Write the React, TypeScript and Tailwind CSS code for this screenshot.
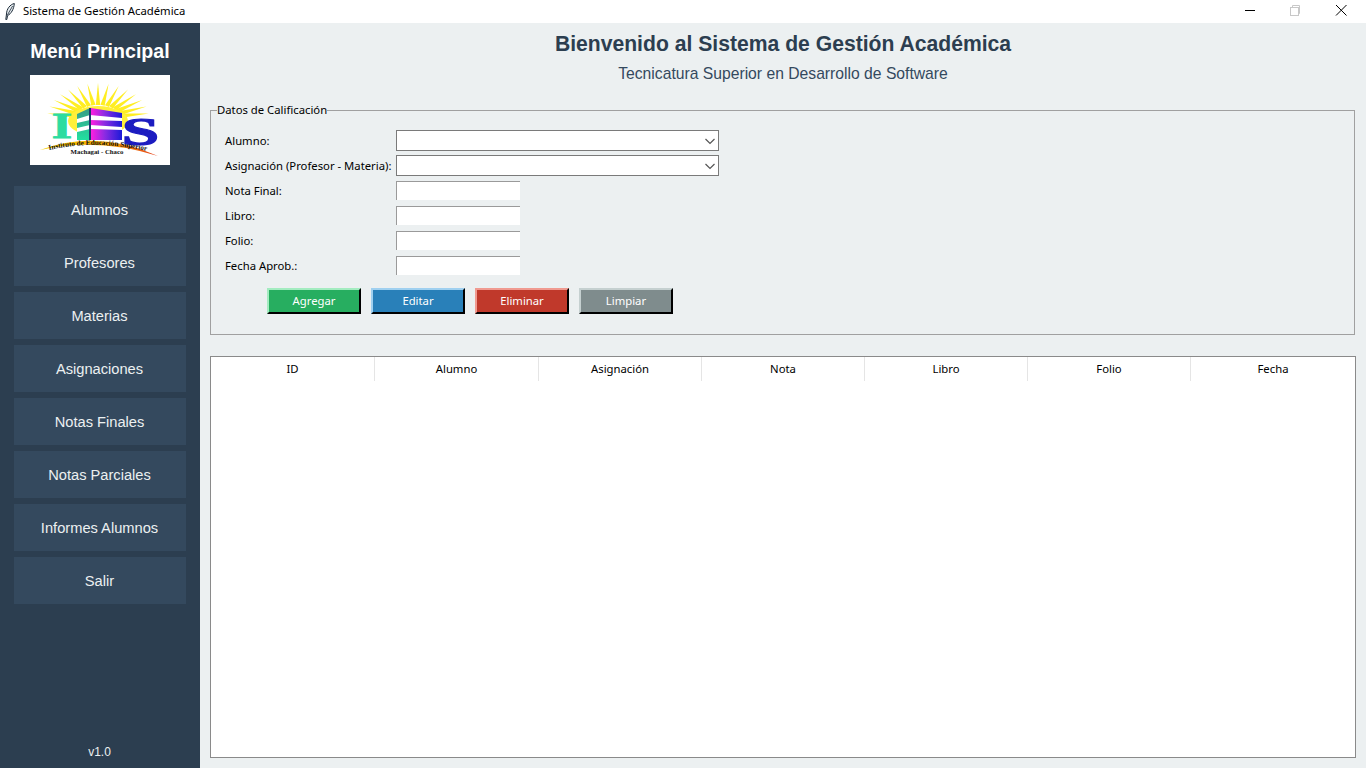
import React from "react";

const menu = ["Alumnos", "Profesores", "Materias", "Asignaciones", "Notas Finales", "Notas Parciales", "Informes Alumnos", "Salir"];
const rays = [-84, -72, -60, -48, -36, -24, -12, 0, 12, 24, 36, 48, 60, 72, 84];
const cols: [string, string][] = [
  ["ID", "w-[164px]"],
  ["Alumno", "w-[164px]"],
  ["Asignación", "w-[163px]"],
  ["Nota", "w-[163px]"],
  ["Libro", "w-[163px]"],
  ["Folio", "w-[163px]"],
  ["Fecha", "flex-1"],
];

function rayPoints(a: number) {
  const t = (a * Math.PI) / 180;
  const tipX = 68 + 51 * Math.sin(t);
  const tipY = 42 - 34 * Math.cos(t);
  const d = 2.2;
  const bx = 68 + 22 * Math.sin(t);
  const by = 42 - 12 * Math.cos(t);
  const nx = Math.cos(t) * d;
  const ny = Math.sin(t) * d;
  return `${tipX},${tipY} ${bx + nx},${by + ny} ${bx - nx},${by - ny}`;
}

function Logo() {
  return (
    <svg viewBox="0 0 140 90" className="w-[140px] h-[90px] block bg-white">
      <defs>
        <linearGradient id="g1" x1="0" x2="1" y1="0" y2="0">
          <stop offset="0" stopColor="#ff1fe0" />
          <stop offset="0.45" stopColor="#8a2be2" />
          <stop offset="1" stopColor="#1a1ad8" />
        </linearGradient>
        <linearGradient id="g2" x1="0" x2="0" y1="0" y2="1">
          <stop offset="0" stopColor="#3a9a86" />
          <stop offset="1" stopColor="#22e0a0" />
        </linearGradient>
        <linearGradient id="sw" x1="0" x2="1" y1="0" y2="0">
          <stop offset="0" stopColor="#f5d000" />
          <stop offset="0.6" stopColor="#f8a000" />
          <stop offset="1" stopColor="#e23a1a" />
        </linearGradient>
        <path id="arc" d="M19 75 Q68 64 121 77" fill="none" />
      </defs>
      {rays.map((a) => (
        <polygon key={a} points={rayPoints(a)} fill="#ffee22" />
      ))}
      <ellipse cx="68" cy="46" rx="30" ry="15" fill="#fff03a" />
      <text transform="translate(32 63) scale(1.5 1)" textAnchor="middle" fontFamily="'Liberation Serif', serif" fontWeight="700" fontSize="35" fill="#2ddca0" stroke="#2ddca0" strokeWidth="0.8">I</text>
      <polygon points="47,39 60,33 60,65 47,65" fill="url(#g2)" />
      <polygon points="61,33 92,38 92,65 61,65" fill="url(#g1)" />
      <polygon points="47,44 60,40 92,43 92,46 60,45 47,48" fill="#ffffff" />
      <polygon points="47,53 60,50 92,52 92,55 60,54 47,57" fill="#ffffff" />
      <rect x="59" y="33" width="2" height="32" fill="#1d3a6e" />
      <text transform="translate(110.5 69.5) scale(1.6 0.95)" textAnchor="middle" fontFamily="'Liberation Serif', serif" fontWeight="700" fontSize="42" fill="#1c1cc0" stroke="#1c1cc0" strokeWidth="1.2">S</text>
      <path d="M10 75 Q68 54 128 81 Q68 62 10 75 Z" fill="url(#sw)" />
      <text fontFamily="'Liberation Serif', serif" fontWeight="700" fontSize="7.2" fill="#111111">
        <textPath href="#arc">Instituto de Educación Superior</textPath>
      </text>
      <text x="67" y="79" textAnchor="middle" fontFamily="'Liberation Serif', serif" fontWeight="700" fontSize="6.8" fill="#111111">Machagai - Chaco</text>
    </svg>
  );
}

function Combo() {
  return (
    <div className="w-[323px] h-[21px] bg-white border border-[#7a7a7a] flex items-center justify-end pr-[2px]">
      <svg width="12" height="12" viewBox="0 0 12 12" className="block">
        <path d="M1.5 4 L6 8.5 L10.5 4" fill="none" stroke="#555555" strokeWidth="1.2" />
      </svg>
    </div>
  );
}

function Entry() {
  return <div className="w-[124px] h-[19px] bg-white border-t border-l border-[#9a9a9a]" />;
}

function Row({ label, children }: { label: string; children: React.ReactNode }) {
  return (
    <div className="h-[25px] flex items-center">
      <div className="w-[171px] pt-[1px] text-[11.3px] text-black whitespace-nowrap">{label}</div>
      {children}
    </div>
  );
}

const btnBase = "w-[94px] h-[26px] border-2 border-r-black border-b-black text-white text-[11.3px] flex items-center justify-center";

export default function App() {
  return (
    <div className="w-[1366px] h-[768px] overflow-hidden flex flex-col bg-white font-['Noto_Sans','Open_Sans',sans-serif]">
      <div className="h-[23px] shrink-0 bg-white flex items-center text-[11.3px] text-black">
        <svg width="10" height="17" viewBox="0 0 10 17" className="ml-[5px] mr-[8px] block">
          <path d="M9.3 0.5 C5 1.5 1.6 6 1.5 11 L0.8 16.5 L1.8 16.5 L2.6 12.5 C6 11 9 6 9.3 0.5 Z" fill="#e8eef2" stroke="#1c2a38" strokeWidth="1" />
          <path d="M7.6 3 L2.4 12" stroke="#1c2a38" strokeWidth="0.8" />
        </svg>
        <span>Sistema de Gestión Académica</span>
        <div className="ml-auto flex items-center">
          <svg width="46" height="23" viewBox="0 0 46 23" className="block">
            <line x1="17" y1="10.5" x2="27" y2="10.5" stroke="#000000" />
          </svg>
          <svg width="46" height="23" viewBox="0 0 46 23" className="block">
            <rect x="16.5" y="7.5" width="8" height="8" fill="none" stroke="#c8c8c8" />
            <path d="M18.5 7 V5.5 H25.5 V13.5 H25" fill="none" stroke="#c8c8c8" />
          </svg>
          <svg width="46" height="23" viewBox="0 0 46 23" className="block">
            <path d="M16 5 L26.5 15.5 M26.5 5 L16 15.5" stroke="#000000" fill="none" />
          </svg>
        </div>
      </div>
      <div className="flex-1 flex min-h-0">
        <aside className="w-[200px] shrink-0 bg-[#2c3e50] flex flex-col items-center font-['Liberation_Sans',sans-serif] text-white">
          <div className="mt-[16px] h-[24px] leading-[24px] text-[19.6px] font-bold">Menú Principal</div>
          <div className="mt-[12px]"><Logo /></div>
          <div className="mt-[21px] flex flex-col gap-[6px]">
            {menu.map((m) => (
              <div key={m} className="w-[172px] h-[47px] bg-[#34495e] flex items-center justify-center text-[14.67px] text-[#ecf0f1] pr-[1px]">{m}</div>
            ))}
          </div>
          <div className="mt-auto mb-[7px] text-[12px] text-[#ecf0f1] pr-[1px]">v1.0</div>
        </aside>
        <main className="flex-1 bg-[#ecf0f1] pl-[10px] pr-[10px] pb-[10px] flex flex-col min-w-0">
          <div className="font-['Liberation_Sans',sans-serif] text-center text-[#2c3e50] h-[80px]">
            <div className="mt-[8px] h-[26px] leading-[26px] text-[21.15px] font-bold">Bienvenido al Sistema de Gestión Académica</div>
            <div className="mt-[7px] h-[20px] leading-[20px] text-[15.7px] text-[#34495e]">Tecnicatura Superior en Desarrollo de Software</div>
          </div>
          <fieldset className="border border-[#a0a0a0] h-[232px] mr-[1px] pl-[14px]">
            <legend className="text-[11.3px] text-black leading-[14px] ml-[-8px]">Datos de Calificación</legend>
            <div className="mt-[11px] flex flex-col">
              <Row label="Alumno:"><Combo /></Row>
              <Row label="Asignación (Profesor - Materia):"><Combo /></Row>
              <Row label="Nota Final:"><Entry /></Row>
              <Row label="Libro:"><Entry /></Row>
              <Row label="Folio:"><Entry /></Row>
              <Row label="Fecha Aprob.:"><Entry /></Row>
            </div>
            <div className="mt-[10px] ml-[42px] flex gap-[10px]">
              <div className={`${btnBase} bg-[#27ae60] border-t-[#a3ecc0] border-l-[#a3ecc0]`}>Agregar</div>
              <div className={`${btnBase} bg-[#2980b9] border-t-[#9fd0f0] border-l-[#9fd0f0]`}>Editar</div>
              <div className={`${btnBase} bg-[#c0392b] border-t-[#f09a90] border-l-[#f09a90]`}>Eliminar</div>
              <div className={`${btnBase} bg-[#7f8c8d] border-t-[#c5d0d0] border-l-[#c5d0d0]`}>Limpiar</div>
            </div>
          </fieldset>
          <div className="mt-[21px] flex-1 bg-white border border-[#8a8a8a]">
            <div className="flex h-[24px]">
              {cols.map(([c, w], i) => (
                <div key={c} className={`${w} flex items-center justify-center text-[11.3px] text-black ${i < 6 ? "border-r border-[#e5e5e5]" : ""}`}>{c}</div>
              ))}
            </div>
          </div>
        </main>
      </div>
    </div>
  );
}
